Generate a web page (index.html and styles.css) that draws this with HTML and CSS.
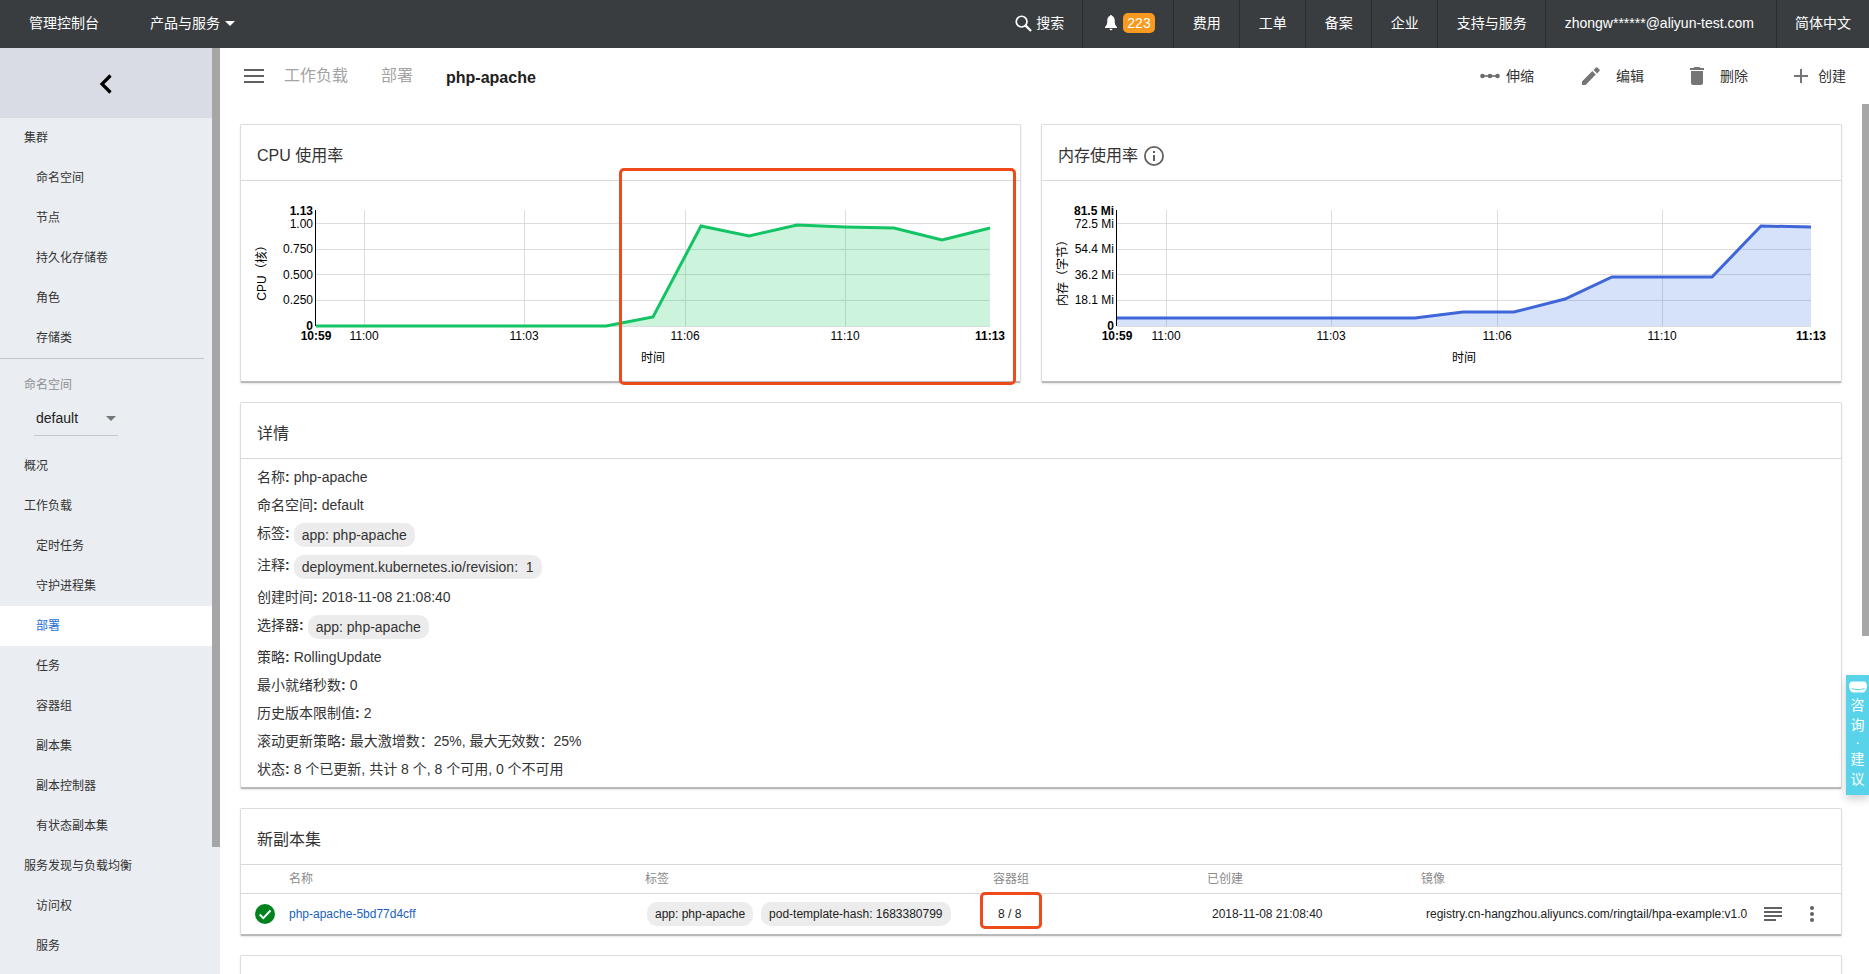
FILE: index.html
```html
<!DOCTYPE html>
<html lang="zh-CN">
<head>
<meta charset="utf-8">
<title>php-apache - 部署</title>
<link rel="stylesheet" href="styles.css">
</head>
<body>
<header class="topbar">
  <a class="top-home" href="#">管理控制台</a>
  <button class="top-products" type="button">产品与服务<span class="caret"></span></button>
  <nav class="top-right">
    <a class="top-link" href="#"><svg width="17" height="17" viewBox="0 0 18 18" fill="none" stroke="#fff"><circle cx="7" cy="7" r="5.700" stroke-width="1.800"/><path d="M11 11l6 6" stroke-width="2.400"/></svg>搜索</a>
    <a class="top-link top-bell" href="#"><svg width="12" height="16" viewBox="0 0 12 16" fill="#fff"><path d="M6 0c.6 0 1 .5 1 1.100 2 .5 2.700 2.400 2.700 4.400 0 3.500.6 5 2.300 6.500v1H0v-1c1.700-1.500 2.300-3 2.300-6.500 0-2 .7-3.900 2.700-4.400C5 .5 5.400 0 6 0zM4.500 13.800h3a1.500 1.500 0 0 1-3 0z"/></svg><span class="badge">223</span></a>
    <a class="top-link" href="#">费用</a>
    <a class="top-link" href="#">工单</a>
    <a class="top-link" href="#">备案</a>
    <a class="top-link" href="#">企业</a>
    <a class="top-link" href="#">支持与服务</a>
    <a class="top-link top-user" href="#">zhongw******@aliyun-test.com</a>
    <a class="top-link" href="#">简体中文</a>
  </nav>
</header>
<div class="shell">
  <aside class="sidebar">
    <button class="collapse" type="button" aria-label="收起"><svg width="14" height="20" viewBox="0 0 14 20" fill="none" stroke="#000" stroke-width="3.200"><path d="M11.500 1.500L3 10l8.500 8.500"/></svg></button>
    <nav class="menu">
      <a class="item" href="#">集群</a>
      <a class="item sub" href="#">命名空间</a>
      <a class="item sub" href="#">节点</a>
      <a class="item sub" href="#">持久化存储卷</a>
      <a class="item sub" href="#">角色</a>
      <a class="item sub" href="#">存储类</a>
    </nav>
    <div class="namespace">
      <label for="ns">命名空间</label>
      <div class="select-wrap"><select id="ns"><option>default</option></select></div>
    </div>
    <nav class="menu">
      <a class="item" href="#">概况</a>
      <a class="item" href="#">工作负载</a>
      <a class="item sub" href="#">定时任务</a>
      <a class="item sub" href="#">守护进程集</a>
      <a class="item sub active" href="#">部署</a>
      <a class="item sub" href="#">任务</a>
      <a class="item sub" href="#">容器组</a>
      <a class="item sub" href="#">副本集</a>
      <a class="item sub" href="#">副本控制器</a>
      <a class="item sub" href="#">有状态副本集</a>
      <a class="item" href="#">服务发现与负载均衡</a>
      <a class="item sub" href="#">访问权</a>
      <a class="item sub" href="#">服务</a>
    </nav>
    <div class="side-scroll"></div>
  </aside>
  <main class="main">
    <div class="toolbar">
      <button class="burger" type="button" aria-label="菜单"><svg width="20" height="14" viewBox="0 0 20 14" fill="#616161"><path d="M0 0h20v2H0zM0 6h20v2H0zM0 12h20v2H0z"/></svg></button>
      <a class="crumb" href="#">工作负载</a>
      <a class="crumb" href="#">部署</a>
      <h1 class="crumb-now">php-apache</h1>
      <div class="actions">
        <button class="action scale" type="button"><svg width="20" height="8" viewBox="0 0 20 8" fill="#6b6b6b"><circle cx="2.500" cy="4" r="2.300"/><circle cx="10" cy="4" r="2.300"/><circle cx="17.500" cy="4" r="2.300"/><path d="M3 3.200h14v1.600H3z"/></svg>伸缩</button>
        <button class="action" type="button"><svg width="18" height="18" viewBox="0 0 20 20" fill="#757575"><path d="M0 16v4h4L15.300 8.300 11.500 4.500zM19.400 4.400a1.200 1.200 0 0 0 0-1.600L17.100.5a1.200 1.200 0 0 0-1.600 0l-2.700 2.700 3.900 3.900z"/></svg>编辑</button>
        <button class="action" type="button"><svg width="14" height="18" viewBox="0 0 14 18" fill="#757575"><path d="M1 16c0 1.100.9 2 2 2h8c1.100 0 2-.9 2-2V4H1zM14 1h-3.500l-1-1h-5l-1 1H0v2h14z"/></svg>删除</button>
        <button class="action create" type="button"><svg width="14" height="14" viewBox="0 0 14 14" stroke="#757575" stroke-width="2"><path d="M0 7h14M7 0v14"/></svg>创建</button>
      </div>
    </div>
    <div class="content">
      <div class="charts">
        <section class="card">
          <h2 class="card-title">CPU 使用率</h2>
          <svg class="chart" viewBox="0 -1 779 200" role="img" aria-label="CPU 使用率">
            <path class="grid" d="M75 41.500H749M75 67.500H749M75 92.500H749M75 118.500H749M75 144.500H749M123.500 28V144M283.500 28V144M444.500 28V144M604.500 28V144"/>
            <path class="axis" d="M74.500 28V144"/>
            <path class="cpu-area" d="M75 144L365 144 412 135 460 44 508 54 556 43 604 45 653 46 701 58 749 46V144z"/>
            <path class="line cpu-line" d="M75 144L365 144 412 135 460 44 508 54 556 43 604 45 653 46 701 58 749 46"/>
            <g class="y-labels"><text class="edge" x="72" y="33">1.13</text><text x="72" y="46">1.00</text><text x="72" y="71">0.750</text><text x="72" y="97">0.500</text><text x="72" y="122">0.250</text><text class="edge" x="72" y="148">0</text></g>
            <g class="x-labels"><text class="edge" x="75" y="158">10:59</text><text x="123" y="158">11:00</text><text x="283" y="158">11:03</text><text x="444" y="158">11:06</text><text x="604" y="158">11:10</text><text class="edge" x="749" y="158">11:13</text><text x="412" y="180">时间</text><text transform="rotate(-90 25 88)" x="25" y="88">CPU（核）</text></g>
          </svg>
          <div class="mark mark-chart"></div>
        </section>
        <section class="card">
          <h2 class="card-title">内存使用率<svg width="20" height="20" viewBox="0 0 20 20" fill="#616161"><path d="M9 5h2v2H9zM9 9h2v6H9zM10 0a10 10 0 1 0 0 20 10 10 0 0 0 0-20zm0 18.200a8.200 8.200 0 1 1 0-16.400 8.200 8.200 0 0 1 0 16.400z"/></svg></h2>
          <svg class="chart" viewBox="0 -1 799 200" role="img" aria-label="内存使用率">
            <path class="grid" d="M75 41.500H769M75 67.500H769M75 92.500H769M75 118.500H769M75 144.500H769M124.500 28V144M289.500 28V144M455.500 28V144M620.500 28V144"/>
            <path class="axis" d="M74.500 28V144"/>
            <path class="mem-area" d="M75 136L373 136 421 130 472 130 523 117 570 95 670 95 719 44 769 45V144H75z"/>
            <path class="line mem-line" d="M75 136L373 136 421 130 472 130 523 117 570 95 670 95 719 44 769 45"/>
            <g class="y-labels"><text class="edge" x="72" y="33">81.5 Mi</text><text x="72" y="46">72.5 Mi</text><text x="72" y="71">54.4 Mi</text><text x="72" y="97">36.2 Mi</text><text x="72" y="122">18.1 Mi</text><text class="edge" x="72" y="148">0</text></g>
            <g class="x-labels"><text class="edge" x="75" y="158">10:59</text><text x="124" y="158">11:00</text><text x="289" y="158">11:03</text><text x="455" y="158">11:06</text><text x="620" y="158">11:10</text><text class="edge" x="769" y="158">11:13</text><text x="422" y="180">时间</text><text transform="rotate(-90 25 88)" x="25" y="88">内存（字节）</text></g>
          </svg>
        </section>
      </div>
      <section class="card">
        <h2 class="card-title">详情</h2>
        <dl class="details">
          <div class="row"><dt>名称<b>:</b></dt><dd>php-apache</dd></div>
          <div class="row"><dt>命名空间<b>:</b></dt><dd>default</dd></div>
          <div class="row tall"><dt>标签<b>:</b></dt><dd class="chip">app: php-apache</dd></div>
          <div class="row tall"><dt>注释<b>:</b></dt><dd class="chip">deployment.kubernetes.io/revision: &nbsp;1</dd></div>
          <div class="row"><dt>创建时间<b>:</b></dt><dd>2018-11-08 21:08:40</dd></div>
          <div class="row tall"><dt>选择器<b>:</b></dt><dd class="chip">app: php-apache</dd></div>
          <div class="row"><dt>策略<b>:</b></dt><dd>RollingUpdate</dd></div>
          <div class="row"><dt>最小就绪秒数<b>:</b></dt><dd>0</dd></div>
          <div class="row"><dt>历史版本限制值<b>:</b></dt><dd>2</dd></div>
          <div class="row"><dt>滚动更新策略<b>:</b></dt><dd>最大激增数：25%, 最大无效数：25%</dd></div>
          <div class="row"><dt>状态<b>:</b></dt><dd>8 个已更新, 共计 8 个, 8 个可用, 0 个不可用</dd></div>
        </dl>
      </section>
      <section class="card">
        <h2 class="card-title">新副本集</h2>
        <table class="sets">
          <colgroup><col class="c-icon"><col><col class="c-tags"><col class="c-pods"><col class="c-time"><col class="c-image"><col class="c-menu"></colgroup>
          <thead><tr><th></th><th>名称</th><th>标签</th><th>容器组</th><th>已创建</th><th>镜像</th><th></th></tr></thead>
          <tbody><tr>
            <td class="status"><svg width="20" height="20" viewBox="0 0 20 20"><circle cx="10" cy="10" r="10" fill="#00831d"/><path d="M4.700 10.500l3.600 3.600 7.200-7.600" fill="none" stroke="#fff" stroke-width="2"/></svg></td>
            <td><a class="set-link" href="#">php-apache-5bd77d4cff</a></td>
            <td><div class="tags"><span class="chip">app: php-apache</span><span class="chip">pod-template-hash: 1683380799</span></div></td>
            <td class="inset"><span class="pods">8 / 8<span class="mark mark-pods"></span></span></td>
            <td class="inset">2018-11-08 21:08:40</td>
            <td class="inset"><div class="image"><span>registry.cn-hangzhou.aliyuncs.com/ringtail/hpa-example:v1.0</span><button class="icon" type="button" aria-label="日志"><svg width="18" height="14" viewBox="0 0 18 14" fill="#616161"><path d="M0 0h18v2H0zM0 4h18v2H0zM0 8h18v2H0zM0 12h12v2H0z"/></svg></button></div></td>
            <td class="more"><button class="icon" type="button" aria-label="更多"><svg width="4" height="16" viewBox="0 0 4 16" fill="#616161"><circle cx="2" cy="2" r="2"/><circle cx="2" cy="8" r="2"/><circle cx="2" cy="14" r="2"/></svg></button></td>
          </tr></tbody>
        </table>
      </section>
      <section class="card next"></section>
    </div>
    <div class="main-scroll"></div>
    <button class="feedback" type="button"><svg width="18" height="12" viewBox="0 0 18 12"><path d="M3 .5h12c1.500 0 3 2 3 4.500s-1.500 6-4 6.500H4C1.500 11 0 7.500 0 5S1.500.5 3 .5z" fill="#fff"/><path d="M2.500 7.500c3.500 1.500 9.500 1.500 13 0" fill="none" stroke="#59d3e9"/></svg><span>咨</span><span>询</span><span class="dot">·</span><span>建</span><span>议</span></button>
  </main>
</div>
</body>
</html>
```
FILE: styles.css
```css
* { box-sizing: border-box; }
body {
  margin: 0;
  height: 100vh;
  display: flex;
  flex-direction: column;
  overflow: hidden;
  background: #fff;
  color: #333;
  font: 14px/20px "Liberation Sans", "Noto Sans CJK SC", sans-serif;
}
a { color: inherit; text-decoration: none; }
button { border: 0; padding: 0; background: none; color: inherit; font: inherit; }
svg { display: block; flex: none; }
h1, h2, dl, dd { margin: 0; font-weight: 400; }

.topbar {
  flex: none;
  display: flex;
  align-items: center;
  height: 48px;
  padding-left: 29px;
  background: #393d40;
  color: #fff;
}
.top-home { margin-right: 51px; padding-bottom: 2px; }
.top-products { display: flex; align-items: center; gap: 5px; padding-bottom: 2px; }
.caret { border: 5px solid transparent; border-top-color: #fff; border-bottom: 0; }
.top-right { display: flex; margin-left: auto; }
.top-link {
  display: flex;
  align-items: center;
  gap: 4px;
  height: 48px;
  padding: 0 18px 2px;
  border-left: 1px solid #2a2d2f;
  white-space: nowrap;
}
.top-link:first-child { border-left: 0; }
.top-link:last-child { padding-left: 18px; }
.top-bell { gap: 6px; padding-left: 22px; }
.top-user { padding-right: 22px; }
.top-user, .top-link:nth-child(n+3):nth-child(-n+7) { padding-left: 19px; }
.badge {
  height: 20px;
  padding: 0 4px;
  border-radius: 5px;
  background: #f89a20;
}

.shell { flex: 1; display: flex; min-height: 0; }
.sidebar {
  position: relative;
  flex: none;
  width: 220px;
  background: #eaedf1;
  font-size: 12px;
}
.collapse {
  display: flex;
  align-items: center;
  justify-content: center;
  width: 212px;
  height: 70px;
  padding-top: 2px;
  background: #d9dce4;
}
.menu { display: flex; flex-direction: column; }
.item { padding: 10px 24px; }
.sub { padding-left: 36px; }
.active { background: #fff; color: #1a6fd6; }
.namespace {
  width: 204px;
  height: 88px;
  padding: 16px 24px;
  border-top: 1px solid #c2c5c9;
  color: #8d9093;
}
.namespace label { display: block; height: 20px; }
.select-wrap {
  position: relative;
  width: 84px;
  margin: 6px 10px;
  border-bottom: 1px solid #c4c7ca;
}
.select-wrap::after {
  content: "";
  position: absolute;
  right: 2px;
  top: 15px;
  border: 5px solid transparent;
  border-top-color: #757575;
  border-bottom: 0;
}
.namespace select {
  appearance: none;
  width: 100%;
  height: 34px;
  padding: 0 2px;
  border: 0;
  background: none;
  color: #222;
  font: 14px/20px "Liberation Sans", sans-serif;
}
.side-scroll {
  position: absolute;
  top: 0;
  right: 0;
  width: 8px;
  height: 799px;
  background: #a6a6a6;
}

.main { position: relative; flex: 1; min-width: 0; overflow: hidden; }
.toolbar {
  display: flex;
  align-items: center;
  height: 56px;
  padding: 0 23px 0 24px;
}
.burger { margin-right: 20px; }
.crumb { margin-right: 33px; color: #a3a3a3; font-size: 16px; }
.crumb-now { padding-top: 4px; color: #212121; font-size: 16px; font-weight: 700; }
.actions { display: flex; gap: 46px; margin-left: auto; }
.action { display: flex; align-items: center; gap: 16px; }
.scale { gap: 6px; margin-right: 2px; }
.create { gap: 10px; }

.content {
  display: flex;
  flex-direction: column;
  gap: 19px;
  padding: 20px 27px 0 20px;
}
.charts { display: grid; grid-template-columns: 781fr 801fr; gap: 20px; }
.card {
  position: relative;
  border: 1px solid #dcdcdc;
  border-bottom: 2px solid #b9b9b9;
  border-radius: 2px;
  background: #fff;
  box-shadow: 0 1px 2px #0000001a;
}
.card-title {
  display: flex;
  align-items: center;
  gap: 6px;
  height: 56px;
  padding: 6px 16px 0;
  border-bottom: 1px solid #d8d8d8;
  font-size: 16px;
}
.chart { width: 100%; font-size: 12px; }
.grid { stroke: #dcdcdc; fill: none; }
.axis { stroke: #000; }
.line { fill: none; stroke-width: 3; }
.cpu-line { stroke: #12c463; }
.cpu-area { fill: #00c752; fill-opacity: .2; }
.mem-line { stroke: #3f66d9; }
.mem-area { fill: #326de6; fill-opacity: .2; }
.y-labels { text-anchor: end; }
.x-labels { text-anchor: middle; }
.edge { font-weight: 700; }
.mark { position: absolute; border: 3px solid #ee4a1c; border-radius: 5px; }
.mark-chart { top: 43px; right: 4px; bottom: -4px; width: 397px; }

.details { padding: 4px 16px; }
.row { display: flex; gap: 4px; height: 28px; line-height: 28px; }
.tall { height: 32px; }
.chip {
  height: 24px;
  padding: 0 8px;
  border-radius: 10px;
  background: #ececec;
  line-height: 24px;
  white-space: nowrap;
}
.details .chip { margin-top: 4px; }

.sets { width: 100%; table-layout: fixed; border-collapse: collapse; font-size: 12px; }
.sets th, .sets td { padding: 0; text-align: left; }
.sets th { height: 28px; color: #8a8a8a; font-weight: 400; }
.sets td { height: 41px; border-top: 1px solid #d8d8d8; color: #212121; }
.c-icon { width: 48px; }
.c-tags { width: 348px; }
.c-pods, .c-time { width: 214px; }
.c-image { width: 361px; }
.c-menu { width: 59px; }
.sets .status { padding-left: 14px; }
.set-link { color: #1a5fbf; }
.tags { display: flex; gap: 8px; padding-left: 2px; }
.sets .inset { padding-left: 5px; }
.pods { position: relative; }
.mark-pods { top: -15px; left: -18px; width: 62px; height: 37px; }
.image { display: flex; align-items: center; justify-content: space-between; white-space: nowrap; }
.icon { display: block; }
.sets .more { padding-left: 28px; }
.next { height: 80px; }

.main-scroll {
  position: absolute;
  top: 56px;
  right: 0;
  width: 7px;
  height: 532px;
  background: #a6a6a6;
}
.feedback {
  position: absolute;
  right: 0;
  top: 627px;
  display: flex;
  flex-direction: column;
  align-items: center;
  width: 23px;
  height: 120px;
  padding: 6px 0;
  background: #59d3e9;
  color: #fff;
  box-shadow: 0 4px 8px #00000030;
}
.feedback svg { margin-bottom: 2px; }
.feedback .dot { line-height: 14px; }
```
